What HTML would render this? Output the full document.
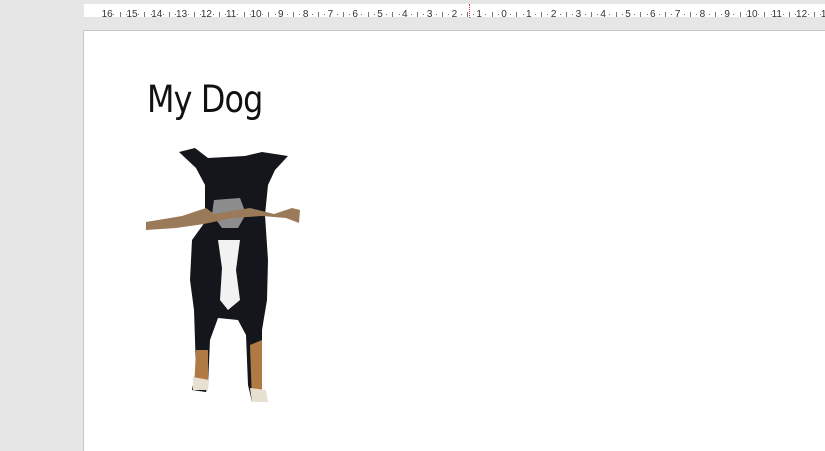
<!DOCTYPE html><html><head><style>
body{margin:0;width:825px;height:441px;background:#e6e6e6;position:relative;overflow:hidden;font-family:"Liberation Sans",sans-serif}
#ruler{position:absolute;left:84px;top:4px;width:741px;height:13px;background:#fff}
.n{position:absolute;top:4px;font-size:10px;color:#333;transform:translateX(-50%);line-height:13px}
.t{position:absolute;top:8px;width:1px;height:5px;background:#777}
.d{position:absolute;top:10px;width:1px;height:1px;background:#777}
#page{position:absolute;left:83px;top:30px;width:750px;height:420px;background:#fff;border-top:1px solid #c8c8c8;border-left:1px solid #c8c8c8}
h1{position:absolute;left:147px;top:78px;margin:0;font-weight:normal;font-size:37px;color:#111;font-family:"DejaVu Sans","Liberation Sans",sans-serif;letter-spacing:-1px;transform:scaleX(0.86);transform-origin:0 0}
</style></head><body>
<div id="ruler"></div>
<div id="page"></div>
<div style="position:absolute;left:469px;top:4px;width:0;height:14px;border-left:1px dotted #e03030"></div>
<h1>My Dog</h1>
<svg style="position:absolute;left:0;top:0" width="825" height="441">
<path d="M179 152 L195 148 L208 158 L245 156 L262 152 L288 156 L275 170 L268 185 L265 215 L268 260 L267 300 L262 330 L262 390 L268 402 L252 402 L248 385 L246 335 L238 320 L218 318 L210 340 L208 385 L206 392 L192 390 L196 370 L194 310 L190 280 L192 240 L205 222 L205 185 L196 168Z" fill="#15161c"/>
<path d="M218 240 L240 240 L236 270 L240 300 L228 310 L220 300 L222 268Z" fill="#f2f2f2"/>
<path d="M214 200 L240 198 L246 214 L238 228 L222 228 L212 214Z" fill="#8d8d8d"/>
<path d="M196 350 L208 350 L208 385 L194 390Z M250 345 L262 340 L262 390 L268 402 L252 402Z" fill="#b07a45"/>
<path d="M193 377 L209 380 L208 390 L193 390Z M250 388 L266 390 L268 402 L252 402Z" fill="#e8e0d0"/>
<path d="M146 222 L182 216 L206 208 L214 214 L250 208 L274 214 L292 208 L300 210 L299 223 L286 218 L262 216 L232 218 L204 224 L176 228 L146 230Z" fill="#9a7a58"/>
</svg>
<script>
var r=document.getElementById('ruler'),h='';
for(var k=-16;k<=13;k++){var x=504+24.8*k-84;
h+='<span class="n" style="left:'+x+'px">'+Math.abs(k)+'</span>';
h+='<span class="t" style="left:'+(x+12.4)+'px"></span>';
h+='<span class="d" style="left:'+(x+6.2)+'px"></span><span class="d" style="left:'+(x+18.6)+'px"></span>';}
r.innerHTML=h;
</script>
</body></html>
